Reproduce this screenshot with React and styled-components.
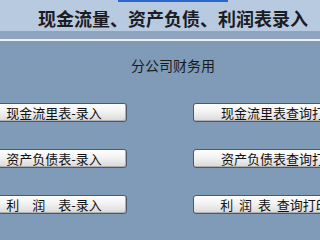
import React from "react";
import styled, { createGlobalStyle } from "styled-components";

const GlobalStyle = createGlobalStyle`
  html, body {
    margin: 0;
    padding: 0;
    background: #7f9bb7;
    overflow: hidden;
  }
  body {
    font-family: "Noto Sans CJK SC", "Noto Sans", sans-serif;
  }
`;

const Page = styled.div`
  width: 320px;
  height: 240px;
  overflow: hidden;
  background: #7f9bb7;
`;

const Header = styled.div`
  height: 31px;
  background: #b8cadf;
  overflow: hidden;
`;

const TabMark = styled.div`
  width: 110px;
  height: 2px;
  margin-left: 118px;
  background: #2c66c8;
`;

const Title = styled.h1`
  margin: 5px 0 0 38px;
  font-size: 18px;
  line-height: 22px;
  font-weight: 700;
  color: #1c1c24;
  white-space: nowrap;
`;

const Band = styled.div`
  height: 8px;
  background: #8ea5bf;
`;

const Divider = styled.div`
  height: 2px;
  background: #eef2f7;
`;

const Main = styled.div`
  padding-top: 16px;
`;

const Subtitle = styled.div`
  margin-left: 131px;
  font-size: 14px;
  line-height: 16px;
  color: #1a1a1a;
  white-space: nowrap;
`;

const ButtonGrid = styled.div`
  margin-top: 30px;
  display: grid;
  grid-template-columns: 146px 173px;
  column-gap: 66px;
  row-gap: 27px;
  margin-left: -19px;
`;

const Button = styled.div`
  height: 19px;
  box-sizing: border-box;
  padding-right: ${({ $shift }) => ($shift ? `${$shift}px` : "0")};
  border: 1px solid #4e5866;
  border-radius: 3px;
  background: linear-gradient(to bottom, #ffffff 0%, #f2f2f2 45%, #d9d9d9 100%);
  box-shadow: inset -1px -1px 0 #b0b0b0;
  font-size: 13px;
  line-height: 17px;
  color: #111;
  text-align: center;
  white-space: pre;
`;

const rows = [
  ["现金流里表-录入", "现金流里表查询打印", 0],
  ["资产负债表-录入", "资产负债表查询打印", 0],
  ["利　润　表-录入", "利  润  表  查询打印", 10],
];

export default function App() {
  return (
    <Page>
      <GlobalStyle />
      <Header>
        <TabMark />
        <Title>现金流量、资产负债、利润表录入</Title>
      </Header>
      <Band />
      <Divider />
      <Main>
        <Subtitle>分公司财务用</Subtitle>
        <ButtonGrid>
          {rows.map(([a, b, shift]) => (
            <React.Fragment key={a}>
              <Button>{a}</Button>
              <Button $shift={shift}>{b}</Button>
            </React.Fragment>
          ))}
        </ButtonGrid>
      </Main>
    </Page>
  );
}
